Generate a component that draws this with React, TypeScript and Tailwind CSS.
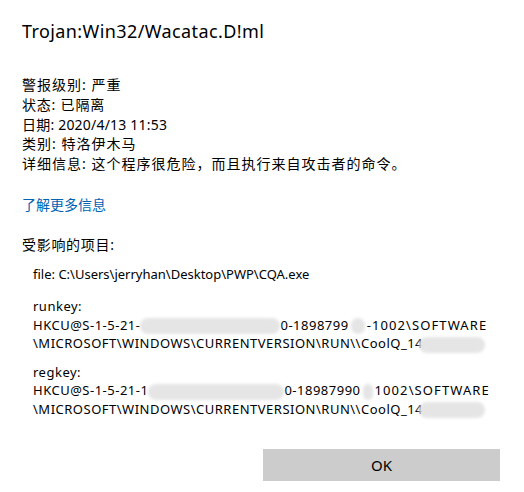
import type { ReactNode } from "react";

function Blob({ w, className = "" }: { w: number; className?: string }) {
  return (
    <span
      className={`inline-block h-[16px] rounded-full bg-[#e5e5e5] align-middle blur-[1.5px] ${className}`}
      style={{ width: w }}
    />
  );
}

function Item({ label, children }: { label: string; children: ReactNode }) {
  return (
    <div className="leading-[18.5px]">
      <div>{label}</div>
      {children}
    </div>
  );
}

export default function App() {
  return (
    <div className="relative h-[492px] w-[524px] overflow-hidden bg-white font-['Segoe_UI','Noto_Sans','Noto_Sans_CJK_SC',sans-serif] text-black">
      <div className="pl-[22px] pt-[19px]">
        <h1 className="text-[18px] leading-[24px] font-normal tracking-[0.4px]">Trojan:Win32/Wacatac.D!ml</h1>

        <div className="mt-[32px] text-[14px] leading-[19.75px]">
          <div className="tracking-[1px]">警报级别: 严重</div>
          <div className="tracking-[0.8px]">状态: 已隔离</div>
          <div className="tracking-[0.2px]">日期: 2020/4/13 11:53</div>
          <div className="tracking-[1px]">类别: 特洛伊木马</div>
          <div className="tracking-[1px]">详细信息: 这个程序很危险，而且执行来自攻击者的命令。</div>
        </div>

        <a className="mt-[21px] block text-[14px] leading-[20px] text-[#0063b1]">了解更多信息</a>

        <div className="mt-[20px] text-[14px] leading-[20px] tracking-[0.7px]">受影响的项目:</div>

        <div className="mt-[10px] flex flex-col pl-[11px] text-[13px] tracking-[0.5px]">
          <div className="leading-[18.5px] tracking-normal">file: C:\Users\jerryhan\Desktop\PWP\CQA.exe</div>

          <div className="mt-[14px]">
            <Item label="runkey:">
              <div className="whitespace-nowrap">
                HKCU@S-1-5-21-
                <Blob w={140} />
                0-1898799
                <Blob w={14} className="mx-[2px]" />
                <span className="tracking-[1.1px]">-1002\SOFTWARE</span>
              </div>
              <div className="whitespace-nowrap">
                \MICROSOFT\WINDOWS\CURRENTVERSION\RUN\\CoolQ_14
                <Blob w={66} className="-ml-[4px]" />
              </div>
            </Item>
          </div>

          <div className="mt-[10px]">
            <Item label="regkey:">
              <div className="whitespace-nowrap">
                HKCU@S-1-5-21-1
                <Blob w={136} />
                0-18987990
                <Blob w={10} className="mx-[2px]" />
                <span className="tracking-[1.1px]">1002\SOFTWARE</span>
              </div>
              <div className="whitespace-nowrap">
                \MICROSOFT\WINDOWS\CURRENTVERSION\RUN\\CoolQ_14
                <Blob w={66} className="-ml-[4px]" />
              </div>
            </Item>
          </div>
        </div>
      </div>

      <div className="mt-[31px] flex justify-end pr-[24px]">
        <button className="h-[32px] w-[237px] bg-[#cccccc] text-[15px] text-black">OK</button>
      </div>
    </div>
  );
}
